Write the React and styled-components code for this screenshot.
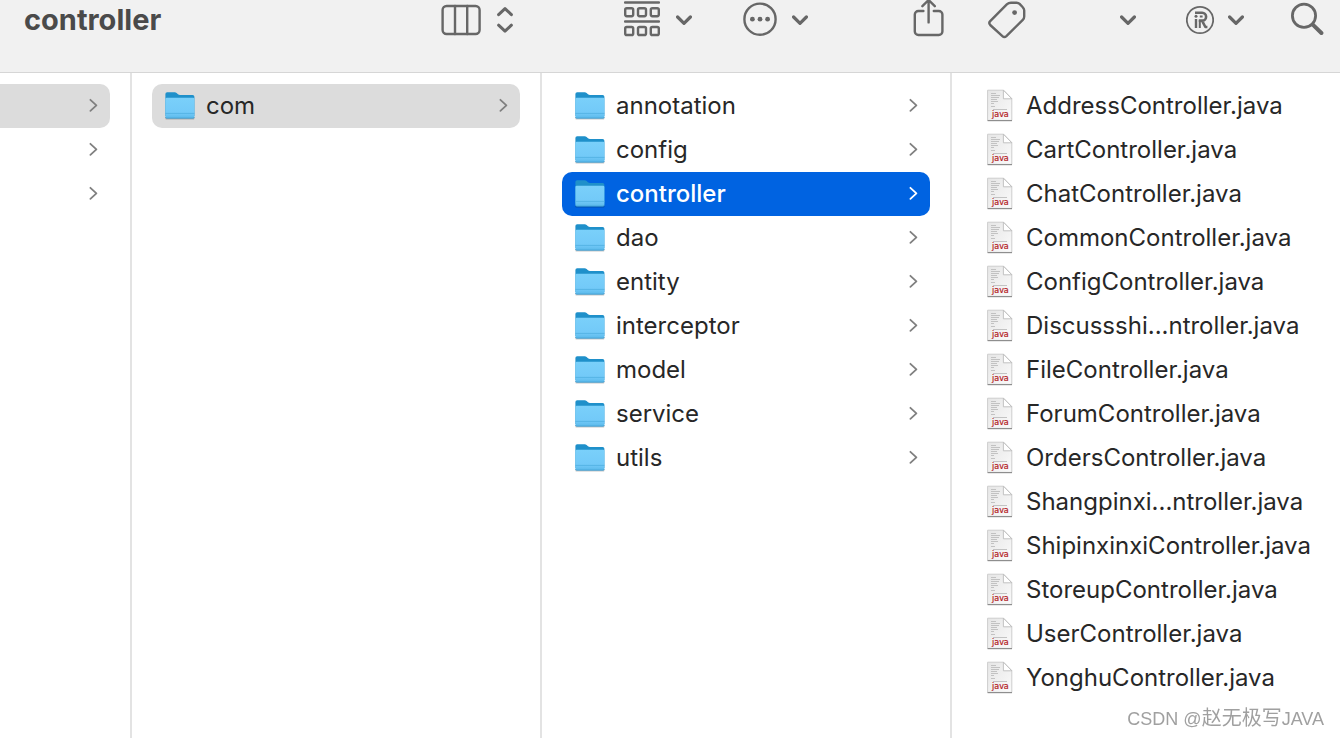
import React from "react";
import styled, { createGlobalStyle } from "styled-components";

const GlobalStyle = createGlobalStyle`
  * { box-sizing: border-box; }
  html, body, #root { height: 100%; }
  body {
    margin: 0;
    background: #fff;
    color: #272727;
    font-family: Inter, "Liberation Sans", "Noto Sans CJK SC", sans-serif;
    overflow: hidden;
  }
`;

const Window = styled.main`
  display: flex;
  flex-direction: column;
  min-height: 100vh;
`;

const Toolbar = styled.header`
  display: flex;
  align-items: flex-start;
  height: 73px;
  padding: 0 16px 0 24px;
  background: #f1f1f1;
  border-bottom: 1px solid #d6d6d6;
`;

const Title = styled.h1`
  flex: 1;
  margin: 0;
  font-size: 29px;
  line-height: 40px;
  font-weight: 700;
  color: #4a4a4a;
`;

const ToolButton = styled.button`
  display: flex;
  align-items: center;
  gap: ${(p) => p.$gap || 16}px;
  height: 40px;
  margin: 0 0 0 ${(p) => p.$space || 0}px;
  padding: 0;
  border: 0;
  background: none;
  color: #676767;
`;

const ToolIcon = styled.svg`
  display: block;
  flex: none;
  height: 40px;
  fill: none;
  stroke: currentColor;
  stroke-width: 2.4;
  stroke-linecap: round;
  stroke-linejoin: round;
`;

const Browser = styled.div`
  flex: 1;
  display: grid;
  grid-template-columns: 132px 410px 410px minmax(0, 1fr);
`;

const Column = styled.ul`
  margin: 0;
  padding: 11px 20px;
  list-style: none;
  border-right: ${(p) => (p.$last ? "0" : "2px solid #e3e3e3")};
  ${(p) => p.$cut && "padding-left: 0;"}
  ${(p) => p.$last && "padding-right: 0;"}
`;

const Row = styled.button`
  display: flex;
  align-items: center;
  width: 100%;
  height: 44px;
  padding: 0 12px;
  border: 0;
  border-radius: ${(p) => (p.$cut ? "0 10px 10px 0" : "10px")};
  background: ${(p) => p.$background || "transparent"};
  color: ${(p) => (p.$active ? "#fff" : "inherit")};
  font: inherit;
  font-size: 24px;
  font-weight: ${(p) => (p.$active ? 500 : 400)};
  line-height: 44px;
  text-align: left;
  white-space: nowrap;
`;

const Name = styled.span`
  flex: 1;
  margin-left: 10px;
`;

const Arrow = styled.svg`
  display: block;
  flex: none;
  fill: none;
  stroke: ${(p) => (p.$active ? "#fff" : "#808080")};
  stroke-width: 1.8;
  stroke-linecap: round;
  stroke-linejoin: round;
`;

const Picture = styled.svg`
  display: block;
  flex: none;
`;

const FileLabel = styled.text`
  font-family: "DejaVu Sans", sans-serif;
  font-size: 8px;
  fill: #b3191d;
  stroke: #b3191d;
  stroke-width: 0.2;
`;

const Watermark = styled.div`
  position: fixed;
  right: 16px;
  bottom: 4px;
  font-family: "Liberation Sans", "Noto Sans CJK SC", sans-serif;
  font-size: 18px;
  line-height: 30px;
  color: #a0a0a0;
  text-shadow: 1px 1px 0 #fff;
`;

const WatermarkName = styled.span`
  font-size: 20px;
`;

const ChevronDown = () => (
  <ToolIcon width="16" viewBox="0 0 16 40">
    <path d="M1.6 17 8 23.4 14.4 17" strokeWidth="3.2" />
  </ToolIcon>
);

const ColumnsIcon = () => (
  <ToolIcon width="40" viewBox="0 0 40 40">
    <rect x="1.600" y="6" width="37" height="28" rx="4" />
    <path d="M14 6v28M26.200 6v28" />
  </ToolIcon>
);

const UpDownIcon = () => (
  <ToolIcon width="16" viewBox="0 0 16 40">
    <path d="M1.6 14.6 8 8.6 14.4 14.6M1.6 25.2 8 31.2 14.4 25.2" strokeWidth="3" />
  </ToolIcon>
);

const GroupIcon = () => (
  <ToolIcon width="36" viewBox="0 0 36 40">
    <path d="M1 2.5h34M1 21.5h34" />
    {[8.2, 27].map((y) =>
      [1.2, 14, 26.8].map((x) => (
        <rect key={`${x}-${y}`} x={x} y={y} width="8" height="8" rx="1.6" />
      ))
    )}
  </ToolIcon>
);

const MoreIcon = () => (
  <ToolIcon width="34" viewBox="0 0 34 40">
    <circle cx="17" cy="19.2" r="15.6" />
    <g fill="currentColor" stroke="none">
      <circle cx="9.4" cy="19.2" r="2.4" />
      <circle cx="17" cy="19.2" r="2.4" />
      <circle cx="24.6" cy="19.2" r="2.4" />
    </g>
  </ToolIcon>
);

const ShareIcon = () => (
  <ToolIcon width="32" viewBox="0 0 32 40">
    <path d="M10.400 11H5.400a3.600 3.600 0 0 0-3.600 3.600v16.800A3.600 3.600 0 0 0 5.400 35h20.400a3.600 3.600 0 0 0 3.600-3.600V14.600a3.600 3.600 0 0 0-3.600-3.600h-5" />
    <path d="M15.600 22.400V.6M9.400 6.200 15.600 0 21.800 6.200" />
  </ToolIcon>
);

const TagIcon = () => (
  <ToolIcon width="38" viewBox="0 0 38 40">
    <path d="M2.2 21.2 18.8 4.4Q20.6 2.7 23 2.7h5.6q1.8 0 3 1.2l3.2 3.4q1.4 1.4 1.4 3.2v6q0 2-1.4 3.4L18.4 36.2q-2 1.8-4 0L2.2 25q-1.8-1.9 0-3.8Z" />
    <circle cx="26.600" cy="12.600" r="2.400" fill="currentColor" stroke="none" />
  </ToolIcon>
);

const RegisteredIcon = () => (
  <ToolIcon width="28" viewBox="0 0 28 40">
    <circle cx="14" cy="20" r="13.200" strokeWidth="1.800" />
    <path d="M9 12.800h7.200a3.900 3.900 0 0 1 0 7.800h-3.400M16 20.600l3.400 6.400h2" strokeWidth="2.600" strokeLinecap="butt" />
    <path d="M13.800 16.400h2.800M13.800 20v8" strokeWidth="2" strokeLinecap="butt" />
    <path d="M10 19v9" strokeWidth="2.400" strokeLinecap="butt" />
    <circle cx="10" cy="16.200" r="1.500" fill="currentColor" stroke="none" />
  </ToolIcon>
);

const SearchIcon = () => (
  <ToolIcon width="34" viewBox="0 0 34 40">
    <circle cx="14" cy="15.8" r="11.6" strokeWidth="2.8" />
    <path d="M22.8 24.6 31.4 33" strokeWidth="4" />
  </ToolIcon>
);

const GradientDefs = () => (
  <Picture width="0" height="0" aria-hidden="true">
    <defs>
      <linearGradient id="folderFront" x1="0" y1="0" x2="0" y2="1">
        <stop offset="0" stopColor="#7ad0fa" />
        <stop offset="0.750" stopColor="#72c9f8" />
        <stop offset="1" stopColor="#5ab9ea" />
      </linearGradient>
      <linearGradient id="paper" x1="0" y1="0" x2="1" y2="1">
        <stop offset="0" stopColor="#e6e6e6" />
        <stop offset="1" stopColor="#fafafa" />
      </linearGradient>
    </defs>
  </Picture>
);

const FolderIcon = () => (
  <Picture width="32" height="32" viewBox="0 0 32 32" aria-hidden="true">
    <path d="M1.400 27h29v1.400q0 1.200-1.200 1.200H2.600q-1.200 0-1.200-1.200Z" fill="#00000038" />
    <path d="M1.400 4q0-1.800 1.800-1.800h7.400q1.200 0 2 .8l1.400 1.200q.8.800 2 .8h12.600q1.800 0 1.800 1.800V26h-29Z" fill="#1f90ca" />
    <path d="M1.400 9q0-1.200 1.400-1.200h26.200q1.400 0 1.400 1.200v17.800q0 1.400-1.400 1.400H2.800q-1.400 0-1.400-1.400Z" fill="url(#folderFront)" />
    <path d="M1.400 23.400h29" stroke="#4faee0" strokeWidth="0.800" />
    <path d="M1.400 27.200q.2 1 1.400 1h26.200q1.200 0 1.400-1" fill="none" stroke="#3a9bd0" strokeWidth="0.800" />
  </Picture>
);

const JavaIcon = () => (
  <Picture width="32" height="36" viewBox="0 0 32 36" aria-hidden="true">
    <path d="M3.600 2.200h16l8.200 8.400V32.400H3.600Z" fill="url(#paper)" stroke="#cdcdcd" strokeWidth="1" />
    <path d="M3.600 32.600h24.400" stroke="#8e8e8e" strokeWidth="1.200" />
    <path d="M19.400 2.200v8.600h8.400Z" fill="#fff" stroke="#bcbcbc" strokeWidth="0.900" />
    <path
      d="M7 5.500h5M7 7.500h9M7 9.500h8M7 11.500h6M7 13.500h7M7 15.500h3M7 18.500h4M9 21.500h14"
      stroke="#bdbdbd"
      strokeWidth="0.900"
    />
    <FileLabel x="8" y="29">java</FileLabel>
  </Picture>
);

const RowArrow = ({ active }) => (
  <Arrow $active={active} width="10" height="16" viewBox="0 0 10 16" aria-hidden="true">
    <path d="M2.400 1.800 8.400 7.300 2.400 12.800" />
  </Arrow>
);

const packages = [
  "annotation",
  "config",
  "controller",
  "dao",
  "entity",
  "interceptor",
  "model",
  "service",
  "utils",
];

const files = [
  "AddressController.java",
  "CartController.java",
  "ChatController.java",
  "CommonController.java",
  "ConfigController.java",
  "Discussshi...ntroller.java",
  "FileController.java",
  "ForumController.java",
  "OrdersController.java",
  "Shangpinxi...ntroller.java",
  "ShipinxinxiController.java",
  "StoreupController.java",
  "UserController.java",
  "YonghuController.java",
];

const Spacer = styled.span`
  flex: 1;
`;

export default function App() {
  return (
    <Window>
      <GlobalStyle />
      <Toolbar>
        <Title>controller</Title>
        <ToolButton aria-label="View as columns">
          <ColumnsIcon />
          <UpDownIcon />
        </ToolButton>
        <ToolButton aria-label="Group items" $space={111}>
          <GroupIcon />
          <ChevronDown />
        </ToolButton>
        <ToolButton aria-label="More actions" $space={51} $gap={15}>
          <MoreIcon />
          <ChevronDown />
        </ToolButton>
        <ToolButton aria-label="Share" $space={105}>
          <ShareIcon />
        </ToolButton>
        <ToolButton aria-label="Edit tags" $space={43}>
          <TagIcon />
        </ToolButton>
        <ToolButton aria-label="Options" $space={94}>
          <ChevronDown />
        </ToolButton>
        <ToolButton aria-label="Registered" $space={50} $gap={14}>
          <RegisteredIcon />
          <ChevronDown />
        </ToolButton>
        <ToolButton aria-label="Search" $space={46}>
          <SearchIcon />
        </ToolButton>
      </Toolbar>
      <Browser>
        <Column $cut>
          {["#dcdcdc", null, null].map((background, i) => (
            <li key={i}>
              <Row $cut $background={background} aria-label={`Folder ${i + 1}`}>
                <Spacer />
                <RowArrow />
              </Row>
            </li>
          ))}
        </Column>
        <Column>
          <li>
            <Row $background="#dcdcdc">
              <FolderIcon />
              <Name>com</Name>
              <RowArrow />
            </Row>
          </li>
        </Column>
        <Column>
          {packages.map((name) => {
            const active = name === "controller";
            return (
              <li key={name}>
                <Row $active={active} $background={active ? "#0063e1" : null}>
                  <FolderIcon />
                  <Name>{name}</Name>
                  <RowArrow active={active} />
                </Row>
              </li>
            );
          })}
        </Column>
        <Column $last>
          {files.map((name) => (
            <li key={name}>
              <Row>
                <JavaIcon />
                <Name>{name}</Name>
              </Row>
            </li>
          ))}
        </Column>
      </Browser>
      <Watermark>
        CSDN @<WatermarkName>赵无极写</WatermarkName>JAVA
      </Watermark>
      <GradientDefs />
    </Window>
  );
}
